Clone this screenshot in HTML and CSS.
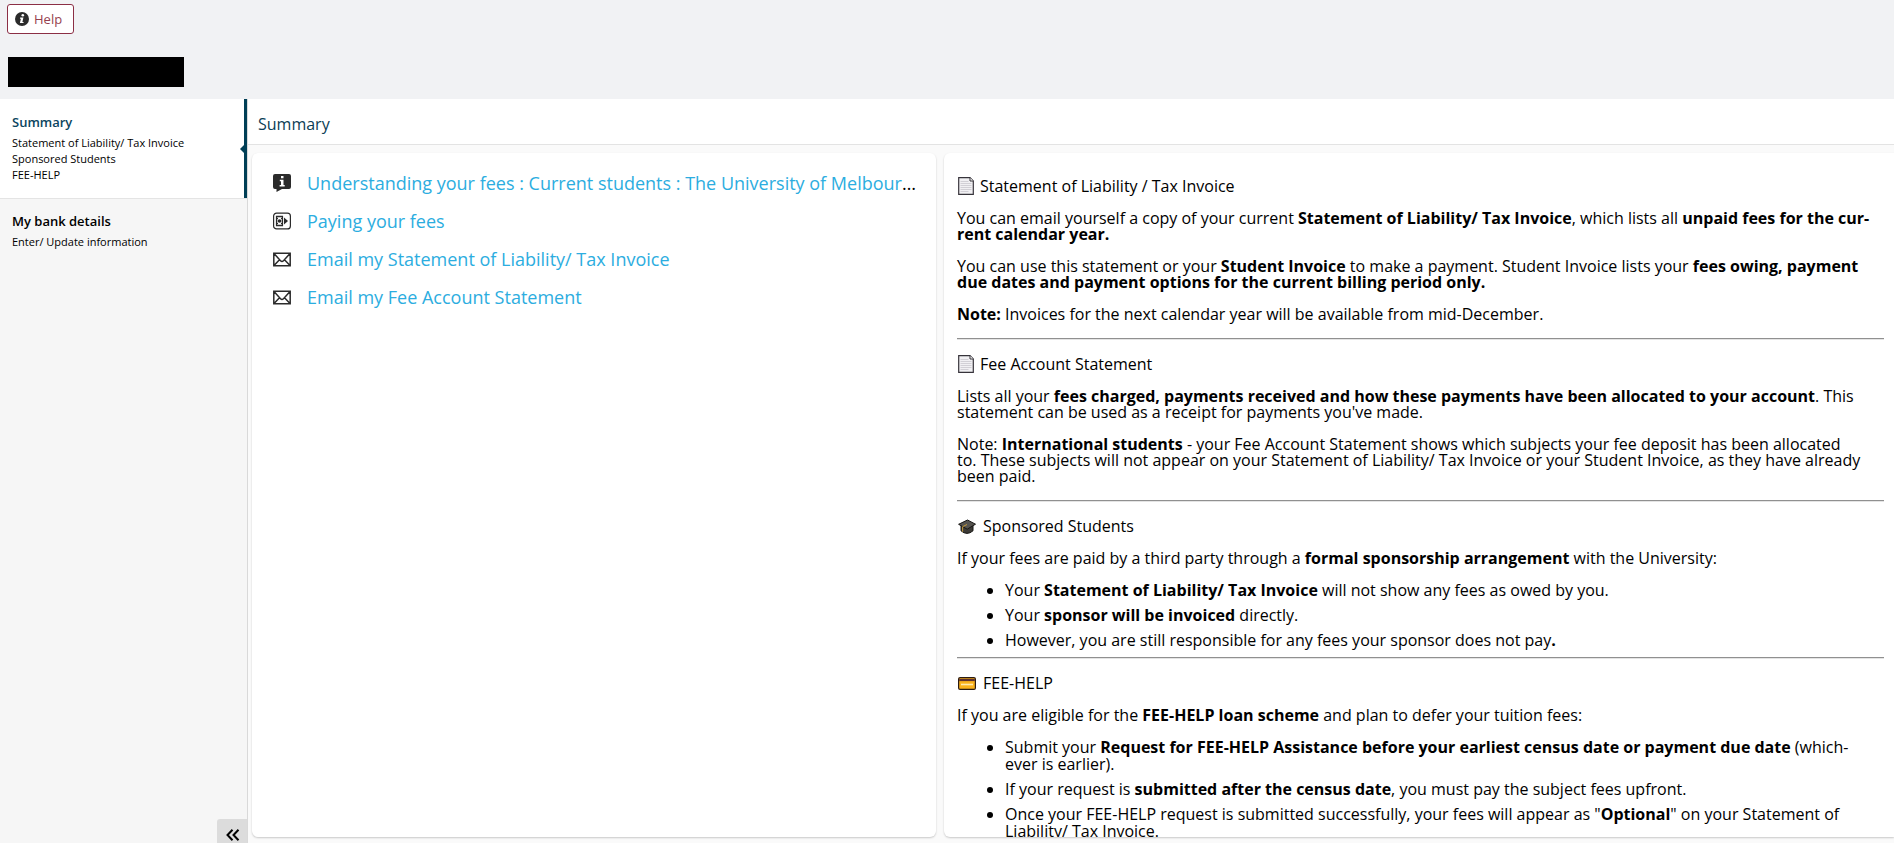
FILE: index.html
```
<!DOCTYPE html>
<html lang="en">
<head>
  <meta charset="UTF-8">
  <title>Summary</title>
  <link rel="stylesheet" href="styles.css">
</head>
<body>

  <header class="topbar">
    <button class="help-btn" type="button">
      <svg class="help-icon" viewBox="0 0 14 14" aria-hidden="true">
        <circle cx="7" cy="7" r="7" fill="#2b2b2b"/>
        <circle cx="7.8" cy="3.3" r="1.3" fill="#fff"/>
        <path d="M5.2 5.6h3.2L7.4 10h1.3l-.3 1H4.900l1-4.300H4.900z" fill="#fff"/>
      </svg>
      Help
    </button>
    <div class="student-name"></div>
  </header>

  <div class="layout">
    <!-- Side menu -->
    <nav class="sidebar">
      <div class="menu-item active">
        <a class="menu-title" href="#">Summary</a>
        <a href="#">Statement of Liability/ Tax Invoice</a>
        <a href="#">Sponsored Students</a>
        <a href="#">FEE-HELP</a>
      </div>
      <div class="menu-item">
        <a class="menu-title" href="#">My bank details</a>
        <a href="#">Enter/ Update information</a>
      </div>
      <button class="collapse-btn" type="button" aria-label="Collapse menu">
        <svg viewBox="0 0 14 12" aria-hidden="true">
          <path d="M6.500 .7L1.500 6l5 5.300M12.500 .7L7.500 6l5 5.300" fill="none" stroke="#000" stroke-width="2"/>
        </svg>
      </button>
    </nav>

    <main class="content">
      <h1 class="page-title">Summary</h1>

      <div class="panels">
        <section class="card links">
          <div class="link-row">
            <svg class="link-icon" viewBox="0 0 18 18" aria-hidden="true">
              <path d="M2 0h14a2 2 0 0 1 2 2v11a2 2 0 0 1-2 2H9l-5.500 3V15H2a2 2 0 0 1-2-2V2a2 2 0 0 1 2-2z" fill="#2b2b2b"/>
              <path d="M8 2h2.500v2.200H8zM6.800 5.700h3.700v5.200h1.200v1.500H6.600v-1.500H8V7.200H6.800z" fill="#fff"/>
            </svg>
            <span class="link-text"><a href="#">Understanding your fees : Current students : The University of Melbourne</a></span>
          </div>
          <div class="link-row">
            <svg class="link-icon" viewBox="0 0 18 18" aria-hidden="true">
              <rect x=".6" y="1.100" width="16.800" height="15.800" rx="3" fill="none" stroke="#2b2b2b" stroke-width="1.200"/>
              <path d="M3.600 4.500h5.800v9H3.600z" fill="none" stroke="#2b2b2b" stroke-width="1.400"/>
              <circle cx="6.500" cy="9" r="1.800" fill="#2b2b2b"/>
              <path d="M4 6.500h1M8 6.500h1M4 11.500h1M8 11.500h1" stroke="#2b2b2b"/>
              <path d="M11 5.500L15 9l-4 3.500z" fill="#2b2b2b"/>
            </svg>
            <span class="link-text"><a href="#">Paying your fees</a></span>
          </div>
          <div class="link-row">
            <svg class="link-icon" viewBox="0 0 18 18" aria-hidden="true">
              <path d="M.8 3.300h16.400v12.400H.8zM1 3.500l6.500 7.200q1.500 1.300 3 0L17 3.500M1 15.500l5.500-5.800M17 15.500l-5.500-5.800" fill="none" stroke="#2b2b2b" stroke-width="1.500"/>
            </svg>
            <span class="link-text"><a href="#">Email my Statement of Liability/ Tax Invoice</a></span>
          </div>
          <div class="link-row">
            <svg class="link-icon" viewBox="0 0 18 18" aria-hidden="true">
              <path d="M.8 3.300h16.400v12.400H.8zM1 3.500l6.500 7.200q1.500 1.300 3 0L17 3.500M1 15.500l5.500-5.800M17 15.500l-5.500-5.800" fill="none" stroke="#2b2b2b" stroke-width="1.500"/>
            </svg>
            <span class="link-text"><a href="#">Email my Fee Account Statement</a></span>
          </div>
        </section>

        <section class="card info">
          <h2>
            <svg class="doc-icon" viewBox="0 0 16 18" aria-hidden="true">
              <path d="M.7 .7h11.300l3.300 3.300v13.300H.7z" fill="#f1f0f3" stroke="#37343b" stroke-width="1.200"/>
              <path d="M12 .7v3.300h3.300" fill="#fff" stroke="#37343b"/>
              <path d="M2.500 4.500h8M2.500 6.500h11M2.500 8.500h11M2.500 10.500h11M2.500 12.500h11M2.500 14.500h8" stroke="#d2d0d6"/>
            </svg>
            Statement of Liability / Tax Invoice
          </h2>
          <p>You can email yourself a copy of your current <b>Statement of Liability/ Tax Invoice</b>, which lists all <b>unpaid fees for the cur&shy;rent calendar year.</b></p>
          <p>You can use this statement or your <b>Student Invoice</b> to make a payment. Student Invoice lists your <b>fees owing, payment due dates and payment options for the current billing period only.</b></p>
          <p><b>Note:</b> Invoices for the next calendar year will be available from mid-December.</p>
          <hr>

          <h2>
            <svg class="doc-icon" viewBox="0 0 16 18" aria-hidden="true">
              <path d="M.7 .7h11.300l3.300 3.300v13.300H.7z" fill="#f1f0f3" stroke="#37343b" stroke-width="1.200"/>
              <path d="M12 .7v3.300h3.300" fill="#fff" stroke="#37343b"/>
              <path d="M2.500 4.500h8M2.500 6.500h11M2.500 8.500h11M2.500 10.500h11M2.500 12.500h11M2.500 14.500h8" stroke="#d2d0d6"/>
            </svg>
            Fee Account Statement
          </h2>
          <p>Lists all your <b>fees charged, payments received and how these payments have been allocated to your account</b>. This statement can be used as a receipt for payments you've made.</p>
          <p>Note: <b>International students</b> - your Fee Account Statement shows which subjects your fee deposit has been allocated to.&nbsp;These subjects will not appear on your Statement of Liability/ Tax Invoice or your Student Invoice, as they have already been paid.</p>
          <hr>

          <h2>
            <svg class="wide-icon" viewBox="0 0 18 18" aria-hidden="true">
              <path d="M3 8.500v5.300Q9 19 15 13.800V8.500z" fill="#3c3a36" stroke="#171614"/>
              <path d="M.6 7.300L9.500 3l8 4.200L9.200 12.200z" fill="#55534f" stroke="#171614"/>
              <path d="M9 7.500L4.600 9.700v5" fill="none" stroke="#c39a3d"/>
            </svg>
            Sponsored Students
          </h2>
          <p>If your fees are paid by a third party through a <b>formal sponsorship arrangement</b> with the University:</p>
          <ul>
            <li>Your <b>Statement of Liability/ Tax Invoice</b> will not show any fees as owed by you.</li>
            <li>Your <b>sponsor will be invoiced</b> directly.</li>
            <li>However, you are still responsible for any fees your sponsor does not pay<b>.</b></li>
          </ul>
          <hr>

          <h2>
            <svg class="wide-icon" viewBox="0 0 18 18" aria-hidden="true">
              <rect x=".6" y="3.600" width="16.800" height="11.800" rx="1.500" fill="#fbb21b" stroke="#2b1a12" stroke-width="1.200"/>
              <path d="M1.200 6h15.600" stroke="#5b3030" stroke-width="2.200"/>
              <path d="M3 10.500h12" stroke="#ffe9b0" stroke-width="1.600"/>
            </svg>
            FEE-HELP
          </h2>
          <p>If you are eligible for the <b>FEE-HELP loan scheme</b> and plan to defer your tuition fees:</p>
          <ul>
            <li>Submit your <b>Request for FEE-HELP Assistance before your earliest census date or payment due date</b> (which&shy;ever is earlier).</li>
            <li>If your request is <b>submitted after the census date</b>, you must pay the subject fees upfront.</li>
            <li>Once your FEE-HELP request is submitted successfully, your fees will appear as "<b>Optional</b>" on your Statement of Liability/ Tax Invoice.</li>
          </ul>
        </section>
      </div>
    </main>
  </div>

</body>
</html>
```
FILE: styles.css
```
* {
  box-sizing: border-box;
}

body {
  margin: 0;
  height: 100vh;
  display: flex;
  flex-direction: column;
  overflow: hidden;
  font-family: "Open Sans", sans-serif;
  font-size: 16px;
  color: #000;
  background: #f1f2f4;
}

a {
  color: inherit;
  text-decoration: none;
}

a:hover {
  text-decoration: underline;
}

/* Top bar */
.topbar {
  padding: 4px 8px 12px 7px;
}

.help-btn {
  display: flex;
  align-items: center;
  gap: 5px;
  height: 30px;
  padding: 0 11px 0 7px;
  border: 1px solid #8c2f45;
  border-radius: 3px;
  background: #fff;
  color: #95414f;
  font-family: inherit;
  font-size: 13px;
  cursor: pointer;
}

.help-icon {
  width: 14px;
  height: 14px;
}

.student-name {
  width: 176px;
  height: 30px;
  margin: 23px 0 0 1px;
  background: #000;
}

.layout {
  flex: 1;
  min-height: 0;
  display: flex;
}

/* Side menu */
.sidebar {
  flex: none;
  width: 248px;
  display: flex;
  flex-direction: column;
  border-right: 1px solid #d9d9d9;
  background: #f6f6f6;
}

.menu-item {
  display: flex;
  flex-direction: column;
  padding: 13px 12px 15px;
  font-size: 11px;
  line-height: 16px;
}

.menu-title {
  margin-bottom: 3px;
  font-size: 13px;
  font-weight: 600;
  line-height: 20px;
}

.menu-item.active {
  position: relative;
  border-right: 3px solid #003f56;
  background: #fff;
  box-shadow: 0 1px 0 #e4e4e4;
}

.menu-item.active .menu-title {
  color: #0b4560;
}

/* little pointer on the active bar */
.menu-item.active::after {
  content: "";
  position: absolute;
  top: 50%;
  right: 0;
  margin-top: -4px;
  border: 4px solid transparent;
  border-left-width: 0;
  border-right-color: #003f56;
}

.collapse-btn {
  display: flex;
  align-items: flex-end;
  justify-content: center;
  width: 30px;
  height: 24px;
  margin: auto 0 0 auto;
  padding: 0 0 2px 2px;
  border: none;
  border-radius: 3px 0 0 0;
  background: #dcdcdc;
  cursor: pointer;
}

.collapse-btn svg {
  width: 14px;
  height: 12px;
}

/* Main area */
.content {
  flex: 1;
  min-width: 0;
  display: flex;
  flex-direction: column;
  background: #fafafa;
}

.page-title {
  margin: 0;
  padding: 14px 10px 9px;
  border-bottom: 1px solid #e3e3e3;
  background: #fff;
  color: #0b3d55;
  font-size: 16px;
  font-weight: 400;
  line-height: 22px;
}

.panels {
  flex: 1;
  min-height: 0;
  display: grid;
  grid-template-columns: 684fr 950fr;
  grid-template-rows: minmax(0, 1fr);
  gap: 8px;
  padding: 8px 0 6px 4px;
}

.card {
  min-width: 0;
  overflow: hidden;
  border-radius: 6px;
  background: #fff;
  box-shadow: 0 1px 2px rgba(0, 0, 0, 0.2);
}

.links {
  padding: 11px 18px 11px 21px;
}

.link-row {
  display: flex;
  align-items: center;
  gap: 16px;
  height: 38px;
}

.link-icon {
  flex: none;
  width: 18px;
  height: 18px;
}

.link-text {
  overflow: hidden;
  white-space: nowrap;
  text-overflow: ellipsis;
  font-size: 18px;
}

.link-text a {
  color: #2cade0;
}

.info {
  padding: 9px 10px 0 13px;
  border-radius: 6px 0 0 6px;
  line-height: 16px;
}

.info h2 {
  display: flex;
  align-items: center;
  gap: 6px;
  height: 16px;
  margin: 16px 0;
  padding-left: 1px;
  font-size: 16px;
  font-weight: 400;
}

.info p {
  margin: 16px 0;
}

.info hr {
  margin: 16px 0;
  border: none;
  border-top: 1px solid #909090;
  border-bottom: 1px solid #e4e4e4;
}

.info ul {
  margin: 16px 0 0;
  padding: 0 20px 0 48px;
}

.info li {
  padding-bottom: 8px;
  line-height: 17px;
}

.info ul + hr {
  margin-top: 0;
}

.doc-icon {
  width: 16px;
  height: 18px;
}

.wide-icon {
  width: 18px;
  height: 18px;
  margin-right: 1px;
}
```
